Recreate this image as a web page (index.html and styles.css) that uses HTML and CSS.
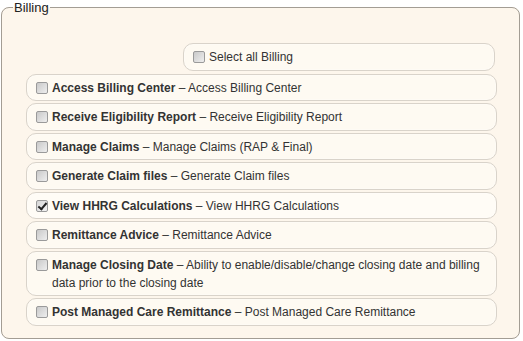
FILE: index.html
```html
<!DOCTYPE html>
<html lang="en">
<head>
  <meta charset="UTF-8" />
  <title>Billing Permissions</title>
  <link rel="stylesheet" href="styles.css">
</head>
<body>

<fieldset class="perm-group">
  <legend>Billing</legend>

  <div class="select-all-wrap">
    <label class="perm-row select-all">
      <input type="checkbox" class="chk">
      <span>Select all Billing</span>
    </label>
  </div>

  <label class="perm-row">
    <input type="checkbox" class="chk">
    <span><b>Access Billing Center</b> &ndash; Access Billing Center</span>
  </label>
  <label class="perm-row">
    <input type="checkbox" class="chk">
    <span><b>Receive Eligibility Report</b> &ndash; Receive Eligibility Report</span>
  </label>
  <label class="perm-row">
    <input type="checkbox" class="chk">
    <span><b>Manage Claims</b> &ndash; Manage Claims (RAP &amp; Final)</span>
  </label>
  <label class="perm-row">
    <input type="checkbox" class="chk">
    <span><b>Generate Claim files</b> &ndash; Generate Claim files</span>
  </label>
  <label class="perm-row checked">
    <input type="checkbox" class="chk" checked>
    <span><b>View HHRG Calculations</b> &ndash; View HHRG Calculations</span>
  </label>
  <label class="perm-row">
    <input type="checkbox" class="chk">
    <span><b>Remittance Advice</b> &ndash; Remittance Advice</span>
  </label>
  <label class="perm-row">
    <input type="checkbox" class="chk">
    <span><b>Manage Closing Date</b> &ndash; Ability to enable/disable/change closing date and billing data prior to the closing date</span>
  </label>
  <label class="perm-row">
    <input type="checkbox" class="chk">
    <span><b>Post Managed Care Remittance</b> &ndash; Post Managed Care Remittance</span>
  </label>
</fieldset>

</body>
</html>
```

FILE: styles.css
```css
body { margin: 0; padding: 0 3px 0 1px; background: #fff; font-family: "Liberation Sans", Arial, sans-serif; font-size: 12px; color: #333; }

.perm-group {
  margin: 0; padding: 12px 22px 10px 24px;
  border: 1px solid #a39d94; border-radius: 8px;
  background: #fdf6ec;
}
.perm-group legend { font-size: 13px; color: #222; padding: 0 1px; margin-left: -13px; line-height: 15px; }

.select-all-wrap { display: flex; justify-content: flex-end; padding-right: 2px; margin-bottom: 1px; margin-top: 16px; }
.perm-row {
  display: flex; align-items: flex-start; gap: 4px;
  padding: 4px 10px 3.5px 9px; margin-bottom: 2px;
  line-height: 18px;
  background: #fefaf2;
  border: 1px solid #d9d3ca; border-radius: 10px;
  box-shadow: inset 0 0 2px rgba(255,255,255,0.9);
}
.perm-row.select-all { width: 291px; }
.perm-row.checked { background: #fffcf6; }
.perm-row b { font-weight: bold; color: #333; }

.chk {
  appearance: none; -webkit-appearance: none;
  width: 12px; height: 12px; margin: 3px 0 0 0; flex: none;
  border: 1px solid #9a9a9a; border-radius: 2px;
  background: linear-gradient(135deg, #c9c9c9, #eeeeee);
  position: relative;
}
.chk:checked { background: linear-gradient(135deg, #d6d6d6, #f4f4f4); }
.chk:checked::after {
  content: ""; position: absolute; left: 3px; top: 0px;
  width: 3px; height: 7px;
  border: solid #222; border-width: 0 2px 2px 0;
  transform: rotate(40deg);
}
```
